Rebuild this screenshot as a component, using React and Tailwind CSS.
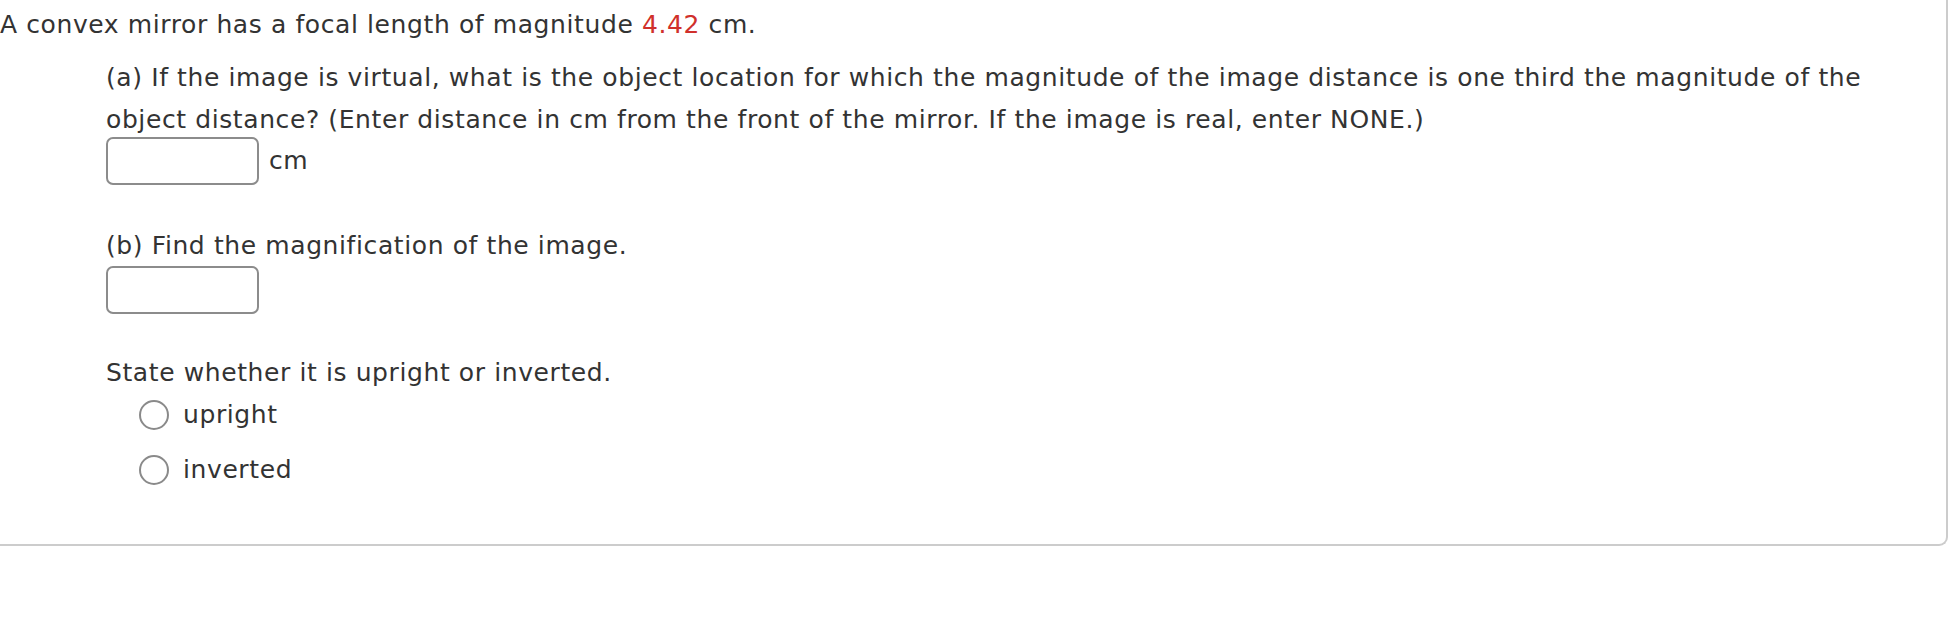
export default function App() {
  return (
    <div className="w-[1948px] bg-white text-[#333] font-['DejaVu_Sans',Verdana,sans-serif] text-[25px] tracking-[0.6px] leading-[42px]">
      <div className="border-r-2 border-b-2 border-[#cccccc] rounded-br-[9px] pt-[4px] pb-[53px]">
        <p>
          A convex mirror has a focal length of magnitude{' '}
          <span className="text-[#d0302b]">4.42</span> cm.
        </p>

        <div className="pl-[106px] pr-[80px]">
          {/* part a */}
          <p className="mt-[11px]">
            (a) If the image is virtual, what is the object location for which the magnitude of the image distance is one third the magnitude of the object distance? (Enter distance in cm from the front of the mirror. If the image is real, enter NONE.)
          </p>
          <div className="-mt-[4px] flex items-center gap-[10px]">
            <input className="w-[153px] h-[48px] border-2 border-[#8c8c8c] rounded-[7px] outline-none" />
            <span>cm</span>
          </div>

          {/* part b */}
          <p className="mt-[40px]">(b) Find the magnification of the image.</p>
          <div className="-mt-[1px]">
            <input className="w-[153px] h-[48px] border-2 border-[#8c8c8c] rounded-[7px] outline-none" />
          </div>

          <p className="mt-[38px]">State whether it is upright or inverted.</p>
          <div className="pl-[33px]">
            {['upright', 'inverted'].map((label, i) => (
              <label key={label} className={`flex items-center gap-[14px] h-[42px] ${i > 0 ? 'mt-[13px]' : ''}`}>
                <span className="w-[30px] h-[30px] rounded-full border-[2.5px] border-[#8a8a8a] shrink-0" />
                <span>{label}</span>
              </label>
            ))}
          </div>
        </div>
      </div>
    </div>
  )
}
